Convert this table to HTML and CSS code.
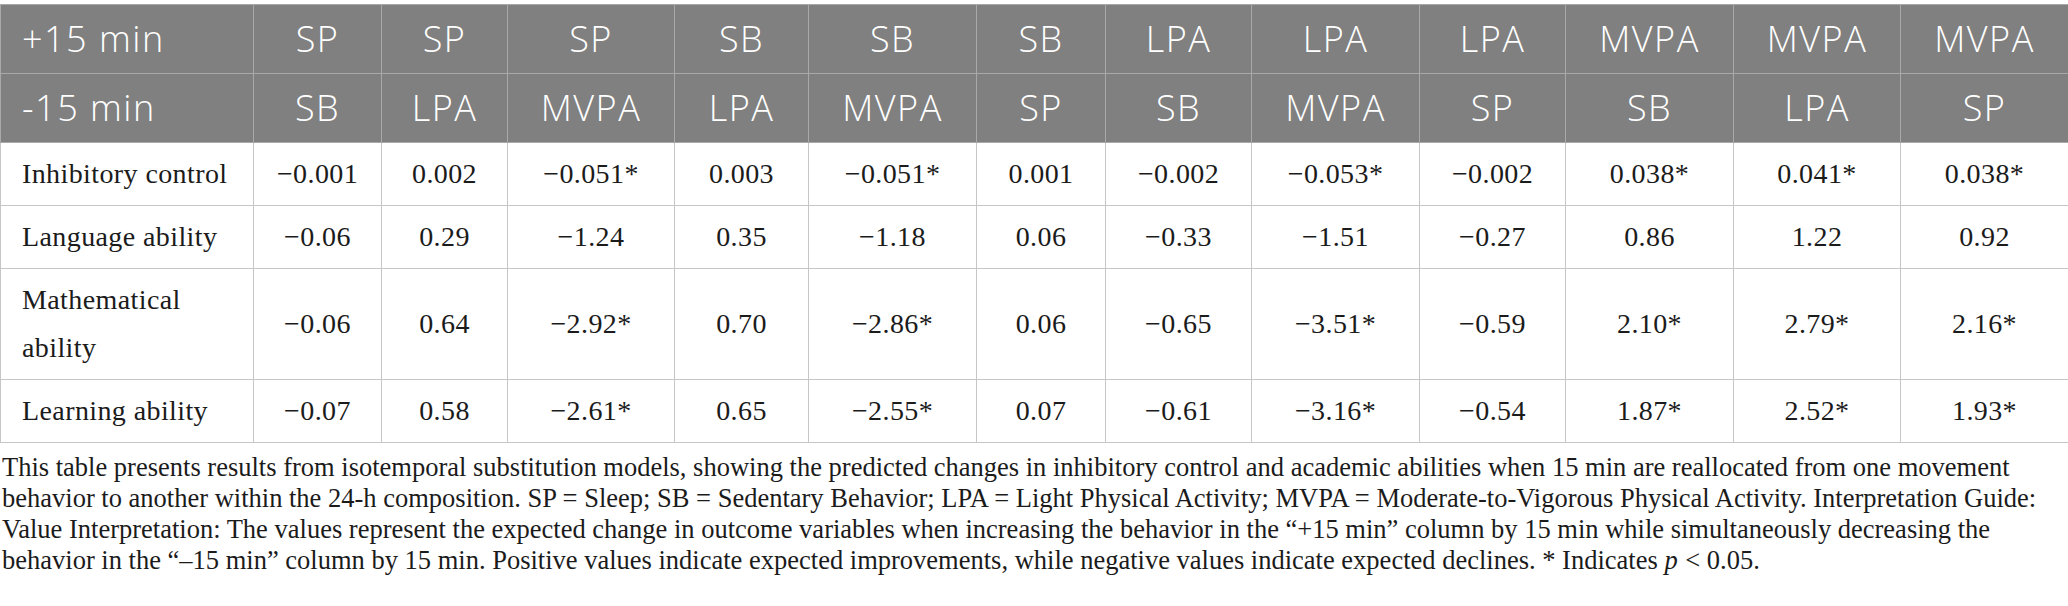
FILE: index.html
```html
<!DOCTYPE html>
<html lang="en">
<head>
<meta charset="utf-8">
<title>Isotemporal substitution</title>
<link rel="stylesheet" href="styles.css">
</head>
<body>
<div class="wrap">
<table class="grid">
<colgroup><col><col><col><col><col><col><col><col><col><col><col><col><col></colgroup>
<thead>
<tr><th class="lead">+15 min</th><th>SP</th><th>SP</th><th>SP</th><th>SB</th><th>SB</th><th>SB</th><th>LPA</th><th>LPA</th><th>LPA</th><th>MVPA</th><th>MVPA</th><th>MVPA</th></tr>
<tr><th class="lead">-15 min</th><th>SB</th><th>LPA</th><th>MVPA</th><th>LPA</th><th>MVPA</th><th>SP</th><th>SB</th><th>MVPA</th><th>SP</th><th>SB</th><th>LPA</th><th>SP</th></tr>
</thead>
<tbody>
<tr><td class="lead">Inhibitory control</td><td>−0.001</td><td>0.002</td><td>−0.051*</td><td>0.003</td><td>−0.051*</td><td>0.001</td><td>−0.002</td><td>−0.053*</td><td>−0.002</td><td>0.038*</td><td>0.041*</td><td>0.038*</td></tr>
<tr><td class="lead">Language ability</td><td>−0.06</td><td>0.29</td><td>−1.24</td><td>0.35</td><td>−1.18</td><td>0.06</td><td>−0.33</td><td>−1.51</td><td>−0.27</td><td>0.86</td><td>1.22</td><td>0.92</td></tr>
<tr><td class="lead">Mathematical ability</td><td>−0.06</td><td>0.64</td><td>−2.92*</td><td>0.70</td><td>−2.86*</td><td>0.06</td><td>−0.65</td><td>−3.51*</td><td>−0.59</td><td>2.10*</td><td>2.79*</td><td>2.16*</td></tr>
<tr><td class="lead">Learning ability</td><td>−0.07</td><td>0.58</td><td>−2.61*</td><td>0.65</td><td>−2.55*</td><td>0.07</td><td>−0.61</td><td>−3.16*</td><td>−0.54</td><td>1.87*</td><td>2.52*</td><td>1.93*</td></tr>
</tbody>
</table>
<p class="note">This table presents results from isotemporal substitution models, showing the predicted changes in inhibitory control and academic abilities when 15 min are reallocated from one movement behavior to another within the 24-h composition. SP = Sleep; SB = Sedentary Behavior; LPA = Light Physical Activity; MVPA = Moderate-to-Vigorous Physical Activity. Interpretation Guide: Value Interpretation: The values represent the expected change in outcome variables when increasing the behavior in the “+15 min” column by 15 min while simultaneously decreasing the behavior in the “–15 min” column by 15 min. Positive values indicate expected improvements, while negative values indicate expected declines. * Indicates <i class="pv">p</i> &lt; 0.05.</p>
</div>
</body>
</html>
```
FILE: styles.css
```css
html, body {
  margin: 0;
  padding: 0;
  background: #ffffff;
}

.wrap {
  padding-top: 4px;
  width: 2068px;
}

.grid {
  width: 2068px;
  border-collapse: collapse;
  table-layout: fixed;
  font-family: "Liberation Serif", "Times New Roman", serif;
  font-size: 28px;
  letter-spacing: 0.4px;
  color: #1b1b1b;
}

.grid col:nth-child(1) { width: 253px; }
.grid col:nth-child(2) { width: 128px; }
.grid col:nth-child(3) { width: 126px; }
.grid col:nth-child(4) { width: 167px; }
.grid col:nth-child(5) { width: 134px; }
.grid col:nth-child(6) { width: 168px; }
.grid col:nth-child(7) { width: 129px; }
.grid col:nth-child(8) { width: 146px; }
.grid col:nth-child(9) { width: 168px; }
.grid col:nth-child(10) { width: 146px; }
.grid col:nth-child(11) { width: 168px; }
.grid col:nth-child(12) { width: 167px; }
.grid col:nth-child(13) { width: 168px; }

.grid th {
  background: #808080;
  color: #ffffff;
  font-family: "Open Sans", "Noto Sans", sans-serif;
  font-weight: 300;
  font-size: 36px;
  letter-spacing: 1.5px;
  line-height: 48px;
  padding: 10px 4px;
  text-align: center;
  border: 1px solid #a9a9a9;
}

.grid td {
  border: 1px solid #c6c6c6;
  text-align: center;
  line-height: 48px;
  padding: 7px 6px;
  vertical-align: middle;
}

.grid .lead {
  text-align: left;
  padding-left: 21px;
}

.note {
  margin: 9px 0 0 0;
  padding-left: 2px;
  font-family: "Liberation Serif", "Times New Roman", serif;
  font-size: 26.5px;
  line-height: 31px;
  letter-spacing: 0;
  color: #1b1b1b;
}

.note .pv {
  padding-right: 1px;
}
```
